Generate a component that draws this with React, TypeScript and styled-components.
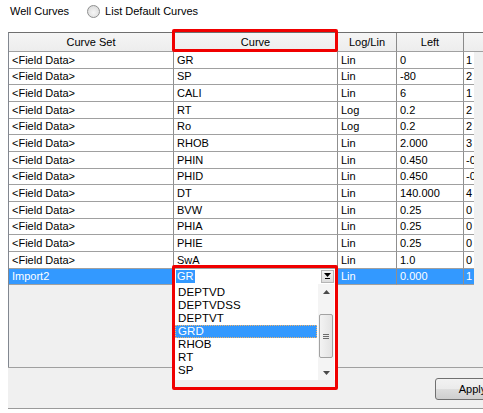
import React from 'react';
import styled, { createGlobalStyle } from 'styled-components';

const Global = createGlobalStyle`
  html, body { margin: 0; padding: 0; background: #ffffff; overflow: hidden; }
  body {
    font-family: "Liberation Sans", Arial, sans-serif;
    font-size: 11px;
    color: #000;
  }
`;

const Page = styled.div`
  width: 483px;
  height: 413px;
  overflow: hidden;
  background: #ffffff;
`;

const TopBar = styled.div`
  display: flex;
  align-items: center;
  height: 22px;
  padding-left: 10px;
  margin-bottom: 10px;
`;

const TopLabel = styled.span`
  white-space: nowrap;
`;

const Radio = styled.span`
  width: 11px;
  height: 11px;
  border-radius: 50%;
  border: 1px solid #8e8f8f;
  background: radial-gradient(circle at 50% 60%, #f6f6f6 0%, #e2e2e2 60%, #d2d2d2 100%);
  margin-left: 18px;
  margin-right: 5px;
  flex: none;
`;

const Grid = styled.div`
  margin-left: 8px;
  width: 560px;
  height: 334px;
  border-left: 1px solid #828790;
  border-top: 1px solid #6f6f6f;
  background: #f0f0f0;
`;

const COLS = '165px 164px 59px 67px 10px';

const HeaderRow = styled.div`
  display: grid;
  grid-template-columns: ${COLS} 1fr;
  height: 19px;
`;

const HeaderCell = styled.div<{ $framed?: boolean; $open?: boolean }>`
  position: relative;
  display: flex;
  align-items: center;
  justify-content: center;
  background: linear-gradient(#f5f5f5, #ededed);
  border-right: ${p => (p.$open ? 'none' : '1px solid #8a8a8a')};
  border-bottom: 1px solid #a0a0a0;
  white-space: nowrap;
  overflow: ${p => (p.$framed ? 'visible' : 'hidden')};
`;

const RedFrame = styled.div<{ $h?: number }>`
  position: absolute;
  top: -4px;
  left: -2px;
  right: -1px;
  ${p => (p.$h ? `height: ${p.$h}px;` : 'bottom: -1px;')}
  border: 3px solid #f00000;
  border-radius: 2px;
  pointer-events: none;
  z-index: 5;
`;

const Row = styled.div<{ $selected?: boolean }>`
  display: grid;
  grid-template-columns: ${COLS};
  height: 16.667px;
  background: ${p => (p.$selected ? '#3399ff' : '#ffffff')};
  color: ${p => (p.$selected ? '#ffffff' : '#000000')};
  width: 465px;
`;

const Cell = styled.div<{ $combo?: boolean }>`
  position: relative;
  display: flex;
  align-items: center;
  padding-left: 3px;
  border-right: 1px solid #8f8f8f;
  border-bottom: 1px solid #a0a0a0;
  white-space: nowrap;
  overflow: ${p => (p.$combo ? 'visible' : 'hidden')};
  background: ${p => (p.$combo ? '#ffffff' : 'transparent')};
  &:last-child { border-right: none; padding-left: 2px; }
`;

const ComboText = styled.span`
  background: #3399ff;
  color: #ffffff;
  padding: 0 1px;
  margin-left: -1px;
  line-height: 13px;
`;

const ComboButton = styled.div`
  position: absolute;
  right: 3px;
  top: 1px;
  width: 13px;
  height: 13px;
  display: flex;
  align-items: center;
  justify-content: center;
  background: linear-gradient(#f4f4f4, #dcdcdc);
  border: 1px solid #b5b5b5;
  box-sizing: border-box;
`;

const DropList = styled.div`
  position: absolute;
  top: 100%;
  left: 0;
  width: 163px;
  height: 96px;
  background: #ffffff;
  display: flex;
  z-index: 4;
  color: #000;
`;

const Items = styled.div`
  flex: 1;
  padding: 2px 0 0 1px;
  display: flex;
  flex-direction: column;
`;

const Item = styled.div<{ $selected?: boolean }>`
  height: 13px;
  line-height: 11px;
  padding-left: 2px;
  box-sizing: border-box;
  font-size: 11.5px;
  letter-spacing: 0.1px;
  background: ${p => (p.$selected ? '#3399ff' : 'transparent')};
  color: ${p => (p.$selected ? '#ffffff' : '#000000')};
  border: 1px dotted ${p => (p.$selected ? '#f2b36b' : 'transparent')};
  margin-right: 1px;
`;

const ScrollBar = styled.div`
  width: 16px;
  margin-right: 3px;
  display: flex;
  flex-direction: column;
  background: #f4f4f4;
`;

const ScrollArrow = styled.div`
  height: 15px;
  display: flex;
  align-items: center;
  justify-content: center;
`;

const Track = styled.div`
  flex: 1;
  display: flex;
  flex-direction: column;
  padding-top: 15px;
`;

const Thumb = styled.div`
  height: 42px;
  margin: 0 1px;
  border: 1px solid #a2a2a2;
  border-radius: 2px;
  background: linear-gradient(90deg, #f3f3f3, #e3e3e3);
  display: flex;
  flex-direction: column;
  align-items: center;
  justify-content: center;
  gap: 1px;
`;

const Grip = styled.span`
  width: 6px;
  height: 1px;
  background: #6b6b6b;
`;

const Panel = styled.div`
  margin-left: 8px;
  width: 600px;
  border-top: 1px solid #a0a0a0;
  border-bottom: 1px solid #9a9a9a;
  background: #f0f0f0;
  padding-top: 10px;
  box-sizing: border-box;
  height: 42px;
`;

const Button = styled.div`
  margin-left: 427px;
  width: 75px;
  height: 22px;
  box-sizing: border-box;
  border: 1px solid #707070;
  border-radius: 3px;
  background: linear-gradient(#f2f2f2 0%, #ebebeb 50%, #dddddd 51%, #cfcfcf 100%);
  display: flex;
  align-items: center;
  justify-content: center;
`;

const rows: [string, string, string, string, string][] = [
  ['<Field Data>', 'GR', 'Lin', '0', '1'],
  ['<Field Data>', 'SP', 'Lin', '-80', '2'],
  ['<Field Data>', 'CALI', 'Lin', '6', '1'],
  ['<Field Data>', 'RT', 'Log', '0.2', '2'],
  ['<Field Data>', 'Ro', 'Log', '0.2', '2'],
  ['<Field Data>', 'RHOB', 'Lin', '2.000', '3'],
  ['<Field Data>', 'PHIN', 'Lin', '0.450', '-0'],
  ['<Field Data>', 'PHID', 'Lin', '0.450', '-0'],
  ['<Field Data>', 'DT', 'Lin', '140.000', '4'],
  ['<Field Data>', 'BVW', 'Lin', '0.25', '0'],
  ['<Field Data>', 'PHIA', 'Lin', '0.25', '0'],
  ['<Field Data>', 'PHIE', 'Lin', '0.25', '0'],
  ['<Field Data>', 'SwA', 'Lin', '1.0', '0'],
];

const listItems = ['DEPTVD', 'DEPTVDSS', 'DEPTVT', 'GRD', 'RHOB', 'RT', 'SP'];

const Tri = ({ up, color = '#4a4a4a' }: { up?: boolean; color?: string }) => (
  <svg width="7" height="4" viewBox="0 0 7 4">
    <polygon points={up ? '0,4 7,4 3.5,0' : '0,0 7,0 3.5,4'} fill={color} />
  </svg>
);

export default function App() {
  return (
    <Page>
      <Global />
      <TopBar>
        <TopLabel>Well Curves</TopLabel>
        <Radio />
        <TopLabel>List Default Curves</TopLabel>
      </TopBar>
      <Grid>
        <HeaderRow>
          <HeaderCell>Curve Set</HeaderCell>
          <HeaderCell $framed>
            Curve
            <RedFrame />
          </HeaderCell>
          <HeaderCell>Log/Lin</HeaderCell>
          <HeaderCell>Left</HeaderCell>
          <HeaderCell $open />
          <HeaderCell $open />
        </HeaderRow>
        {rows.map((r, i) => (
          <Row key={i}>
            {r.map((c, j) => (
              <Cell key={j}>{c}</Cell>
            ))}
          </Row>
        ))}
        <Row $selected>
          <Cell>Import2</Cell>
          <Cell $combo>
            <ComboText>GR</ComboText>
            <ComboButton>
              <svg width="7" height="6" viewBox="0 0 7 6">
                <polygon points="0,0 7,0 3.5,4" fill="#000" />
                <rect x="1" y="5" width="5" height="1" fill="#000" />
              </svg>
            </ComboButton>
            <DropList>
              <Items>
                {listItems.map(it => (
                  <Item key={it} $selected={it === 'GRD'}>
                    {it}
                  </Item>
                ))}
              </Items>
              <ScrollBar>
                <ScrollArrow>
                  <Tri up />
                </ScrollArrow>
                <Track>
                  <Thumb>
                    <Grip />
                    <Grip />
                    <Grip />
                  </Thumb>
                </Track>
                <ScrollArrow>
                  <Tri />
                </ScrollArrow>
              </ScrollBar>
            </DropList>
            <RedFrame $h={119} />
          </Cell>
          <Cell>Lin</Cell>
          <Cell>0.000</Cell>
          <Cell>1</Cell>
        </Row>
      </Grid>
      <Panel>
        <Button>Apply</Button>
      </Panel>
    </Page>
  );
}
